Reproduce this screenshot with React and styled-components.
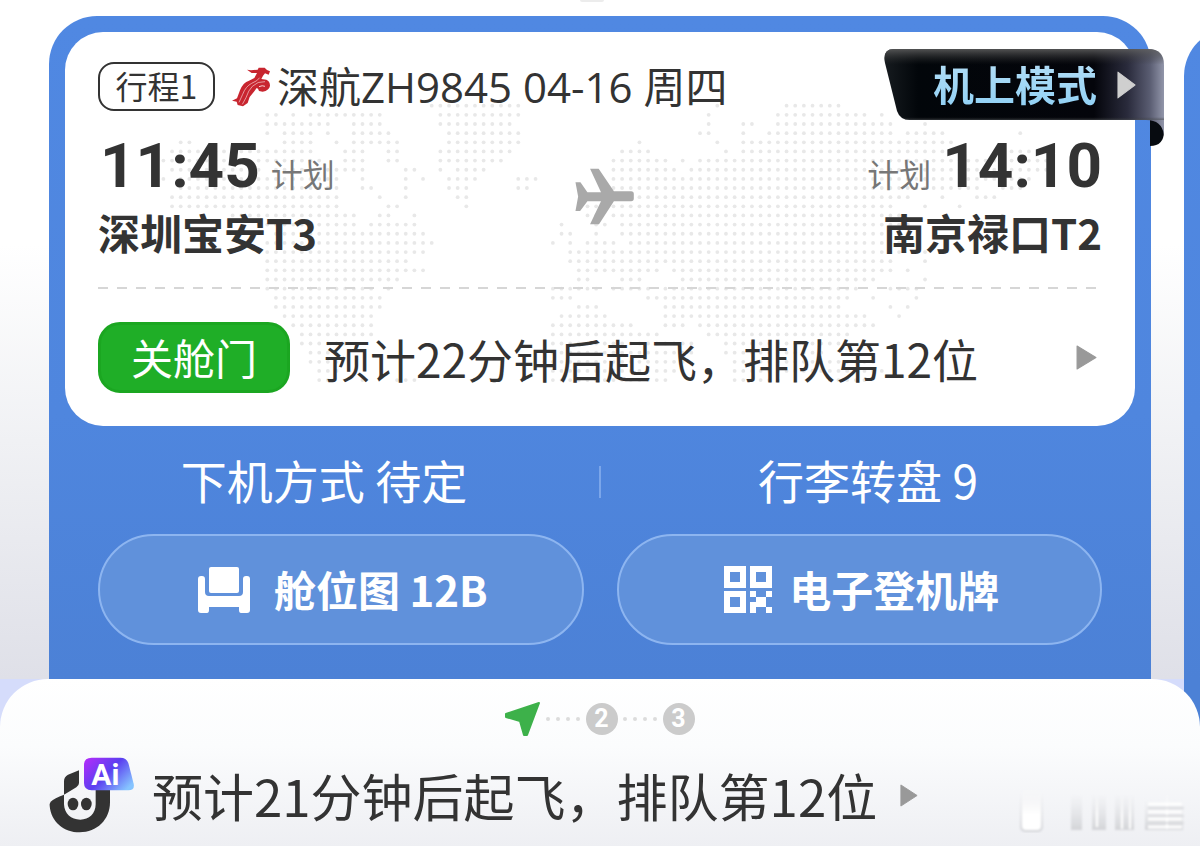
import React from "react";
import styled, { createGlobalStyle } from "styled-components";

const GlobalStyle = createGlobalStyle`
  *, *::before, *::after { box-sizing: border-box; }
  body {
    margin: 0;
    background: #ffffff;
    color: #333333;
    font-family: "Noto Sans CJK SC", "Noto Sans", sans-serif;
  }
  button {
    margin: 0;
    padding: 0;
    border: 0;
    background: none;
    color: inherit;
    font: inherit;
    cursor: pointer;
  }
  svg { display: block; flex: none; }
`;

const Page = styled.main`
  display: flex;
  flex-direction: column;
  min-height: 100vh;
  overflow: hidden;
`;

const Carousel = styled.section`
  position: relative;
  flex: 1;
  display: flex;
  gap: 33px;
  padding: 16px 49px 0;
  background: linear-gradient(180deg, #ffffff 36%, #f0f1f4 65%, #dfe0e8 100%);
`;

const Grip = styled.span`
  position: absolute;
  top: 0;
  left: 50%;
  width: 24px;
  height: 2px;
  margin-left: -20px;
  border-radius: 0 0 8px 8px;
  background: #ececec;
`;

const TripCard = styled.article`
  position: relative;
  flex: 0 0 100%;
  display: flex;
  flex-direction: column;
  margin-top: ${(p) => (p.$next ? "12px" : "0")};
  padding: 16px 16px 0;
  border-radius: 48px 48px 0 0;
  background: linear-gradient(180deg, #5088e2 0%, #4f86de 60%, #4c81d6 100%);
`;

const FlightPanel = styled.div`
  position: relative;
  padding: 30px 33px 33px;
  border-radius: 38px;
  background: #ffffff;
  min-height: ${(p) => (p.$next ? "370px" : "0")};
`;

const MapArt = styled.svg`
  position: absolute;
  top: 68px;
  left: 50%;
  margin-left: -450px;
`;

const HeaderRow = styled.header`
  position: relative;
  display: flex;
  align-items: center;
  height: 49px;
`;

const LegTag = styled.span`
  display: flex;
  align-items: center;
  justify-content: center;
  width: 117px;
  height: 49px;
  margin-right: 16px;
  padding-bottom: 4px;
  border: 2px solid #333333;
  border-radius: 16px;
  font-size: 32px;
  line-height: 40px;
`;

const FlightTitle = styled.h1`
  margin: 0 0 0 6px;
  font-family: "Open Sans", "Noto Sans CJK SC", sans-serif;
  font-size: 42px;
  font-weight: 400;
  line-height: 48px;
  white-space: nowrap;
`;

const Route = styled.div`
  position: relative;
  display: grid;
  grid-template-columns: 1fr auto 1fr;
  align-items: center;
  margin-top: 25px;
  padding-bottom: 30px;
`;

const Endpoint = styled.div`
  text-align: ${(p) => (p.$end ? "right" : "left")};
`;

const TimeLine = styled.div`
  display: flex;
  align-items: baseline;
  justify-content: ${(p) => (p.$end ? "flex-end" : "flex-start")};
  gap: 11px;
  height: 60px;
  padding: 0 0 0 2px;
`;

const Time = styled.time`
  font-family: Roboto, "Liberation Sans", sans-serif;
  font-size: 62px;
  font-weight: 700;
  line-height: 60px;
`;

const Plan = styled.span`
  color: #777777;
  font-size: 32px;
  line-height: 40px;
`;

const Station = styled.div`
  margin-top: 11px;
  font-size: 42px;
  font-weight: 700;
  line-height: 50px;
  white-space: nowrap;
`;

const Dashes = styled.div`
  position: relative;
  height: 2px;
  background: repeating-linear-gradient(90deg, #d6d6d6 0 10px, transparent 10px 19px);
`;

const StatusRow = styled.button`
  position: relative;
  display: flex;
  align-items: center;
  width: 100%;
  margin-top: 33px;
  padding-right: 5px;
  text-align: left;
`;

const StatusTag = styled.span`
  display: flex;
  align-items: center;
  justify-content: center;
  width: 192px;
  height: 71px;
  margin-right: 34px;
  padding-bottom: 2px;
  border: 3px solid #1ba621;
  border-radius: 22px;
  background: #1fae27;
  color: #ffffff;
  font-size: 42px;
  line-height: 60px;
`;

const StatusText = styled.span`
  flex: 1;
  font-size: 46px;
  line-height: 66px;
  white-space: nowrap;
`;

const Ribbon = styled.button`
  position: absolute;
  top: 33px;
  right: -13px;
  width: 280px;
  height: 97px;
`;

const RibbonShape = styled.svg`
  position: absolute;
  inset: 0;
`;

const RibbonLabel = styled.span`
  position: relative;
  display: flex;
  align-items: center;
  gap: 20px;
  height: 71px;
  margin-bottom: 26px;
  padding-left: 49px;
  font-size: 41px;
  font-weight: 700;
  line-height: 60px;
  white-space: nowrap;
`;

const RibbonText = styled.span`
  padding-bottom: 4px;
  background: linear-gradient(180deg, #b4def6 10%, #8fd0f5 90%);
  background-clip: text;
  color: transparent;
`;

const InfoRow = styled.div`
  display: grid;
  grid-template-columns: minmax(0, 1fr) 2px minmax(0, 1fr);
  align-items: center;
  margin: 26px -16px 22px;
`;

const Info = styled.p`
  margin: 0;
  padding: 0 ${(p) => (p.$last ? "16px" : "0")} 6px 0;
  color: #ffffff;
  font-size: 46px;
  line-height: 54px;
  text-align: center;
  white-space: nowrap;
`;

const InfoDivider = styled.span`
  width: 2px;
  height: 32px;
  background: #7ba6ea;
`;

const Actions = styled.div`
  display: grid;
  grid-template-columns: 1fr 1fr;
  gap: 33px;
  padding: 0 33px 34px;
`;

const Action = styled.button`
  display: flex;
  align-items: center;
  justify-content: center;
  gap: ${(p) => p.$gap}px;
  height: 111px;
  padding-left: 4px;
  border: 2px solid #8db5f0;
  border-radius: 56px;
  background: #6091db;
  color: #ffffff;
  font-size: 42px;
  font-weight: 700;
  line-height: 60px;
  white-space: nowrap;
`;

const ActionText = styled.span`
  padding-bottom: 2px;
`;

const SheetBackdrop = styled.section`
  background: linear-gradient(90deg, #d5dcfb calc(100% - 16px), #4c81d6 calc(100% - 16px));
`;

const Sheet = styled.div`
  position: relative;
  padding: 23px 10px 13px 49px;
  border-radius: 48px 48px 0 0;
  background: linear-gradient(180deg, #ffffff 0%, #fbfcfd 40%, #eeeff3 100%);
`;

const Steps = styled.ol`
  display: flex;
  align-items: center;
  justify-content: center;
  height: 34px;
  margin: 0 0 21px;
  padding: 0 40px 0 0;
  list-style: none;
`;

const Step = styled.li`
  display: flex;
  align-items: center;
`;

const StepNumber = styled.span`
  width: 32px;
  height: 32px;
  border-radius: 50%;
  background: #cbcbcb;
  color: #ffffff;
  font-family: Roboto, "Liberation Sans", sans-serif;
  font-size: 25px;
  font-weight: 700;
  line-height: 32px;
  text-align: center;
`;

const Connector = styled.span`
  display: flex;
  justify-content: space-between;
  width: 45px;
  padding: 0 5px;
`;

const Dot = styled.i`
  width: 4px;
  height: 4px;
  border-radius: 50%;
  background: #dcdcdc;
`;

const AssistantRow = styled.div`
  display: flex;
  align-items: flex-end;
  justify-content: space-between;
`;

const AssistantLink = styled.button`
  display: flex;
  align-items: center;
  height: 76px;
  font-size: 51px;
  line-height: 76px;
  white-space: nowrap;
`;

const AssistantText = styled.span`
  margin: 0 23px 0 17px;
`;

/* Land dots of the world map: for each row, [first, last] column runs. */
const MAP_ROWS = [
  [[31, 41], [64, 64], [72, 78]],
  [[12, 13], [15, 15], [17, 25], [32, 41], [63, 63], [71, 81], [83, 83]],
  [[12, 19], [22, 25], [32, 40], [63, 63], [67, 68], [71, 84], [88, 88]],
  [[12, 12], [14, 17], [19, 19], [22, 26], [33, 41], [62, 63], [67, 67], [70, 84], [86, 90], [99, 99]],
  [[2, 3], [14, 17], [20, 20], [22, 27], [33, 41], [55, 55], [64, 64], [67, 91]],
  [[1, 17], [21, 23], [26, 27], [32, 40], [53, 56], [65, 65], [67, 92], [97, 100]],
  [[0, 18], [21, 23], [26, 27], [32, 39], [52, 58], [60, 60], [62, 102]],
  [[1, 11], [13, 23], [28, 29], [32, 32], [34, 37], [52, 59], [61, 102]],
  [[0, 0], [2, 20], [23, 23], [28, 28], [30, 30], [33, 36], [41, 43], [52, 100]],
  [[2, 20], [23, 24], [28, 28], [33, 35], [41, 42], [51, 94], [97, 99]],
  [[1, 20], [25, 25], [28, 28], [34, 35], [49, 86], [90, 90], [94, 96]],
  [[1, 20], [26, 27], [35, 35], [49, 84], [88, 88], [92, 92]],
  [[8, 22], [25, 26], [29, 29], [49, 50], [52, 85]],
  [[11, 22], [24, 29], [46, 46], [50, 51], [53, 86]],
  [[13, 30], [46, 47], [50, 50], [53, 86]],
  [[12, 31], [45, 45], [47, 47], [49, 52], [54, 85]],
  [[12, 30], [47, 85], [88, 88]],
  [[12, 28], [47, 84], [88, 88]],
  [[12, 30], [48, 57], [59, 84], [86, 86]],
  [[12, 27], [48, 49], [53, 55], [60, 82], [88, 88]],
  [[12, 24], [26, 26], [45, 50], [52, 56], [58, 80], [84, 87]],
  [[13, 25], [45, 47], [56, 79], [82, 82], [87, 87]],
  [[13, 25], [48, 50], [58, 78], [84, 84], [86, 86]],
  [[14, 24], [46, 51], [58, 81], [85, 85]],
  [[15, 24], [45, 54], [58, 60], [62, 82]],
  [[16, 24], [45, 57], [63, 79]],
  [[16, 21], [45, 61], [65, 78]],
  [[17, 20], [44, 61], [65, 76]],
  [[17, 20], [44, 60], [66, 82]],
  [[18, 20], [45, 59], [66, 83]],
  [[18, 19], [23, 23], [27, 29], [45, 58], [66, 71], [77, 81]],
];

function WorldMap() {
  const dots = [];
  MAP_ROWS.forEach((runs, row) => {
    runs.forEach(([first, last]) => {
      for (let col = first; col <= last; col += 1) {
        dots.push(
          <circle key={`${row}-${col}`} cx={13.4 + col * 8.655} cy={5.7 + row * 9.147} r="1.9" />
        );
      }
    });
  });
  return (
    <MapArt width="900" height="286" viewBox="0 0 900 286" fill="#e8e8e8" aria-hidden="true">
      {dots}
    </MapArt>
  );
}

function AirlineLogo() {
  return (
    <svg width="40" height="42" viewBox="450 77 120 126" aria-hidden="true">
      <path
        d="M498 88 L510 90 L530 88 L533 82 L551 82 L558 89 L567 93 L563 103 L552 99 L546 106 L541 116 L556 118 Q567 122 567 136 Q565 150 545 154 L534 152 L531 145 L527 143 L520 153 L506 170 L500 188 L486 198 L470 194 L467 184 L453 181 L468 174 L477 150 Q486 126 504 121 L520 113 L528 98 L512 98 Z"
        fill="#c8252f"
      />
      <g fill="none" stroke="#f6d5d7" strokeWidth="2">
        <path d="M536 112 Q530 122 512 129 Q494 138 485 162 L474 186" />
        <path d="M552 124 Q530 122 514 138 Q502 150 495 172 L484 192" />
        <path d="M534 139 Q544 134 552 138" strokeWidth="3" />
      </g>
    </svg>
  );
}

function PlaneIcon() {
  return (
    <svg width="70" height="57" viewBox="195 230 210 172" aria-hidden="true">
      <path
        fill="#a9a9a9"
        d="M270 232 H296 L342 300 H394 Q402 300 402 308 V322 Q402 330 394 330 H342 L297 400 H270 L303 330 H262 L240 360 H226 L234 316 L226 273 H241 L262 303 H303 Z"
      />
    </svg>
  );
}

function Triangle({ width, height, color }) {
  return (
    <svg width={width} height={height} viewBox="0 0 20 24" preserveAspectRatio="none" aria-hidden="true">
      <path d="M1 1 L19 12 L1 23 Z" fill={color} stroke={color} strokeWidth="1" strokeLinejoin="round" />
    </svg>
  );
}

function RibbonArt() {
  return (
    <RibbonShape width="280" height="97" viewBox="0 0 280 97" aria-hidden="true">
      <defs>
        <linearGradient id="ribbon-base" x1="0" x2="1" y1="0" y2="0">
          <stop offset="0" stopColor="#161b1f" />
          <stop offset="0.12" stopColor="#02060a" />
          <stop offset="0.75" stopColor="#04050b" />
          <stop offset="0.87" stopColor="#2a2b3c" />
          <stop offset="0.95" stopColor="#5a5d72" />
          <stop offset="1" stopColor="#9296aa" />
        </linearGradient>
        <linearGradient id="ribbon-sheen" x1="0" x2="0" y1="0" y2="1">
          <stop offset="0" stopColor="#606060" stopOpacity="0.85" />
          <stop offset="0.22" stopColor="#303030" stopOpacity="0" />
          <stop offset="0.96" stopColor="#303030" stopOpacity="0" />
          <stop offset="1" stopColor="#505458" stopOpacity="0.6" />
        </linearGradient>
      </defs>
      <path d="M266 70 H280 V82 Q280 97 266 97 Z" fill="#070b10" />
      <path
        d="M10 0 H264 Q280 0 280 16 V86 Q278 71 262 71 H26 Q16 71 13 62 L1 14 Q-2 0 10 0 Z"
        fill="url(#ribbon-base)"
      />
      <path
        d="M10 0 H264 Q280 0 280 16 V71 H26 Q16 71 13 62 L1 14 Q-2 0 10 0 Z"
        fill="url(#ribbon-sheen)"
      />
    </RibbonShape>
  );
}

function SeatIcon() {
  return (
    <svg width="52" height="46" viewBox="0 0 52 46" fill="#ffffff" aria-hidden="true">
      <rect x="11" y="0" width="30" height="26" rx="2" />
      <path d="M3 9 H4 Q7 9 7 12 V25 Q7 29 11 29 H41 Q45 29 45 25 V12 Q45 9 48 9 H49 Q52 9 52 12 V43 Q52 46 49 46 H43 Q41 46 41 43 V40 H11 V43 Q11 46 9 46 H3 Q0 46 0 43 V12 Q0 9 3 9 Z" />
    </svg>
  );
}

function QrIcon() {
  return (
    <svg width="50" height="48" viewBox="0 0 50 48" aria-hidden="true">
      <g fill="none" stroke="#ffffff" strokeWidth="6">
        <rect x="4" y="3" width="16" height="16" />
        <rect x="30" y="3" width="16" height="16" />
        <rect x="4" y="28" width="16" height="16" />
      </g>
      <path
        fill="#ffffff"
        d="M27 25 H33 V31 H27 Z M43 25 H49 V31 H43 Z M33 31 H43 V36 H33 Z M27 36 H37 V41 H33 V47 H27 Z M37 36 H43 V41 H49 V47 H43 V41 H37 Z"
      />
    </svg>
  );
}

function CurrentStepIcon() {
  return (
    <svg width="36" height="36" viewBox="0 0 36 36" aria-hidden="true">
      <path
        d="M1 13 L34 2 L22 34 L19 34 L15 20 L1 16 Z"
        fill="#3db14a"
        stroke="#3db14a"
        strokeWidth="2"
        strokeLinejoin="round"
      />
    </svg>
  );
}

function AssistantLogo() {
  return (
    <svg width="86" height="76" viewBox="60 52 258 228" role="img" aria-label="Ai">
      <defs>
        <linearGradient id="ai-badge" x1="0" x2="1" y1="0.1" y2="0.75">
          <stop offset="0" stopColor="#b02dfa" />
          <stop offset="0.5" stopColor="#5b3ff0" />
          <stop offset="1" stopColor="#86c4ff" />
        </linearGradient>
      </defs>
      <path
        fill="#333333"
        d="M150 92 L117 105 Q105 111 105 125 V165 Q76 175 65 186 Q61 192 62 198 C66 246 104 278 152 278 C204 278 243 240 243 188 V140 H200 V194 C200 222 180 240 154 240 C126 240 106 222 105 194 V165 L142 143 Q150 138 150 130 Z"
      />
      <ellipse cx="132" cy="193" rx="16" ry="19" fill="#333333" />
      <ellipse cx="172" cy="193" rx="16" ry="19" fill="#333333" />
      <path
        fill="url(#ai-badge)"
        d="M188 54 H274 Q292 54 298 70 L314 132 Q318 152 298 152 H188 Q165 152 165 130 V76 Q165 54 188 54 Z"
      />
      <text
        x="187"
        y="135"
        fill="#ffffff"
        fontFamily="Roboto, 'Liberation Sans', sans-serif"
        fontSize="90"
        fontWeight="700"
      >
        Ai
      </text>
    </svg>
  );
}

function FadedMark() {
  return (
    <svg width="176" height="46" viewBox="0 0 176 46" aria-hidden="true">
      <defs>
        <filter id="mark-soften" x="-10%" y="-20%" width="120%" height="140%">
          <feGaussianBlur stdDeviation="1.2" />
        </filter>
        <linearGradient id="mark-gray" x1="0" x2="0" y1="0" y2="1">
          <stop offset="0" stopColor="#e2e3e6" stopOpacity="0" />
          <stop offset="1" stopColor="#d3d4d8" />
        </linearGradient>
        <linearGradient id="mark-white" x1="0" x2="0" y1="0" y2="1">
          <stop offset="0" stopColor="#ffffff" stopOpacity="0" />
          <stop offset="0.6" stopColor="#ffffff" />
        </linearGradient>
      </defs>
      <g filter="url(#mark-soften)">
        <rect x="6" y="4" width="23" height="41" rx="5" fill="url(#mark-gray)" />
        <rect x="8" y="2" width="19" height="41" rx="4" fill="url(#mark-white)" />
        <g fill="url(#mark-gray)">
          <rect x="57" y="6" width="11" height="37" />
          <rect x="78" y="6" width="14" height="37" />
          <rect x="101" y="6" width="19" height="37" />
          <rect x="131" y="12" width="38" height="31" />
        </g>
        <g fill="url(#mark-white)">
          <rect x="82" y="6" width="2" height="34" />
          <rect x="107" y="6" width="2" height="36" />
          <rect x="115" y="6" width="2" height="36" />
          <rect x="152" y="6" width="2" height="36" />
        </g>
        <path d="M134 17 H168 M134 25 H168 M134 32 H168 M134 40 H168" stroke="#ffffff" strokeWidth="3" />
        <path d="M134 21 H170 M134 29 H170 M134 36 H170" stroke="#dcdde0" strokeWidth="2" />
      </g>
    </svg>
  );
}

function DottedConnector() {
  return (
    <Connector aria-hidden="true">
      <Dot />
      <Dot />
      <Dot />
      <Dot />
    </Connector>
  );
}

function FlightCard() {
  return (
    <TripCard>
      <FlightPanel>
        <WorldMap />
        <HeaderRow>
          <LegTag>行程1</LegTag>
          <AirlineLogo />
          <FlightTitle>深航ZH9845 04-16 周四</FlightTitle>
        </HeaderRow>
        <Route>
          <Endpoint>
            <TimeLine>
              <Time>11:45</Time>
              <Plan>计划</Plan>
            </TimeLine>
            <Station>深圳宝安T3</Station>
          </Endpoint>
          <PlaneIcon />
          <Endpoint $end>
            <TimeLine $end>
              <Plan>计划</Plan>
              <Time>14:10</Time>
            </TimeLine>
            <Station>南京禄口T2</Station>
          </Endpoint>
        </Route>
        <Dashes />
        <StatusRow type="button">
          <StatusTag>关舱门</StatusTag>
          <StatusText>预计22分钟后起飞，排队第12位</StatusText>
          <Triangle width={21} height={25} color="#999999" />
        </StatusRow>
      </FlightPanel>
      <InfoRow>
        <Info>下机方式 待定</Info>
        <InfoDivider />
        <Info $last>行李转盘 9</Info>
      </InfoRow>
      <Actions>
        <Action type="button" $gap={24}>
          <SeatIcon />
          <ActionText>舱位图 12B</ActionText>
        </Action>
        <Action type="button" $gap={16}>
          <QrIcon />
          <ActionText>电子登机牌</ActionText>
        </Action>
      </Actions>
      <Ribbon type="button">
        <RibbonArt />
        <RibbonLabel>
          <RibbonText>机上模式</RibbonText>
          <Triangle width={19} height={28} color="#cfcfcf" />
        </RibbonLabel>
      </Ribbon>
    </TripCard>
  );
}

export default function App() {
  return (
    <>
      <GlobalStyle />
      <Page>
        <Carousel>
          <Grip />
          <FlightCard />
          <TripCard $next aria-hidden="true">
            <FlightPanel $next />
          </TripCard>
        </Carousel>
        <SheetBackdrop>
          <Sheet>
            <Steps>
              <Step>
                <CurrentStepIcon />
              </Step>
              <Step>
                <DottedConnector />
                <StepNumber>2</StepNumber>
              </Step>
              <Step>
                <DottedConnector />
                <StepNumber>3</StepNumber>
              </Step>
            </Steps>
            <AssistantRow>
              <AssistantLink type="button">
                <AssistantLogo />
                <AssistantText>预计21分钟后起飞，排队第12位</AssistantText>
                <Triangle width={18} height={23} color="#999999" />
              </AssistantLink>
              <FadedMark />
            </AssistantRow>
          </Sheet>
        </SheetBackdrop>
      </Page>
    </>
  );
}
